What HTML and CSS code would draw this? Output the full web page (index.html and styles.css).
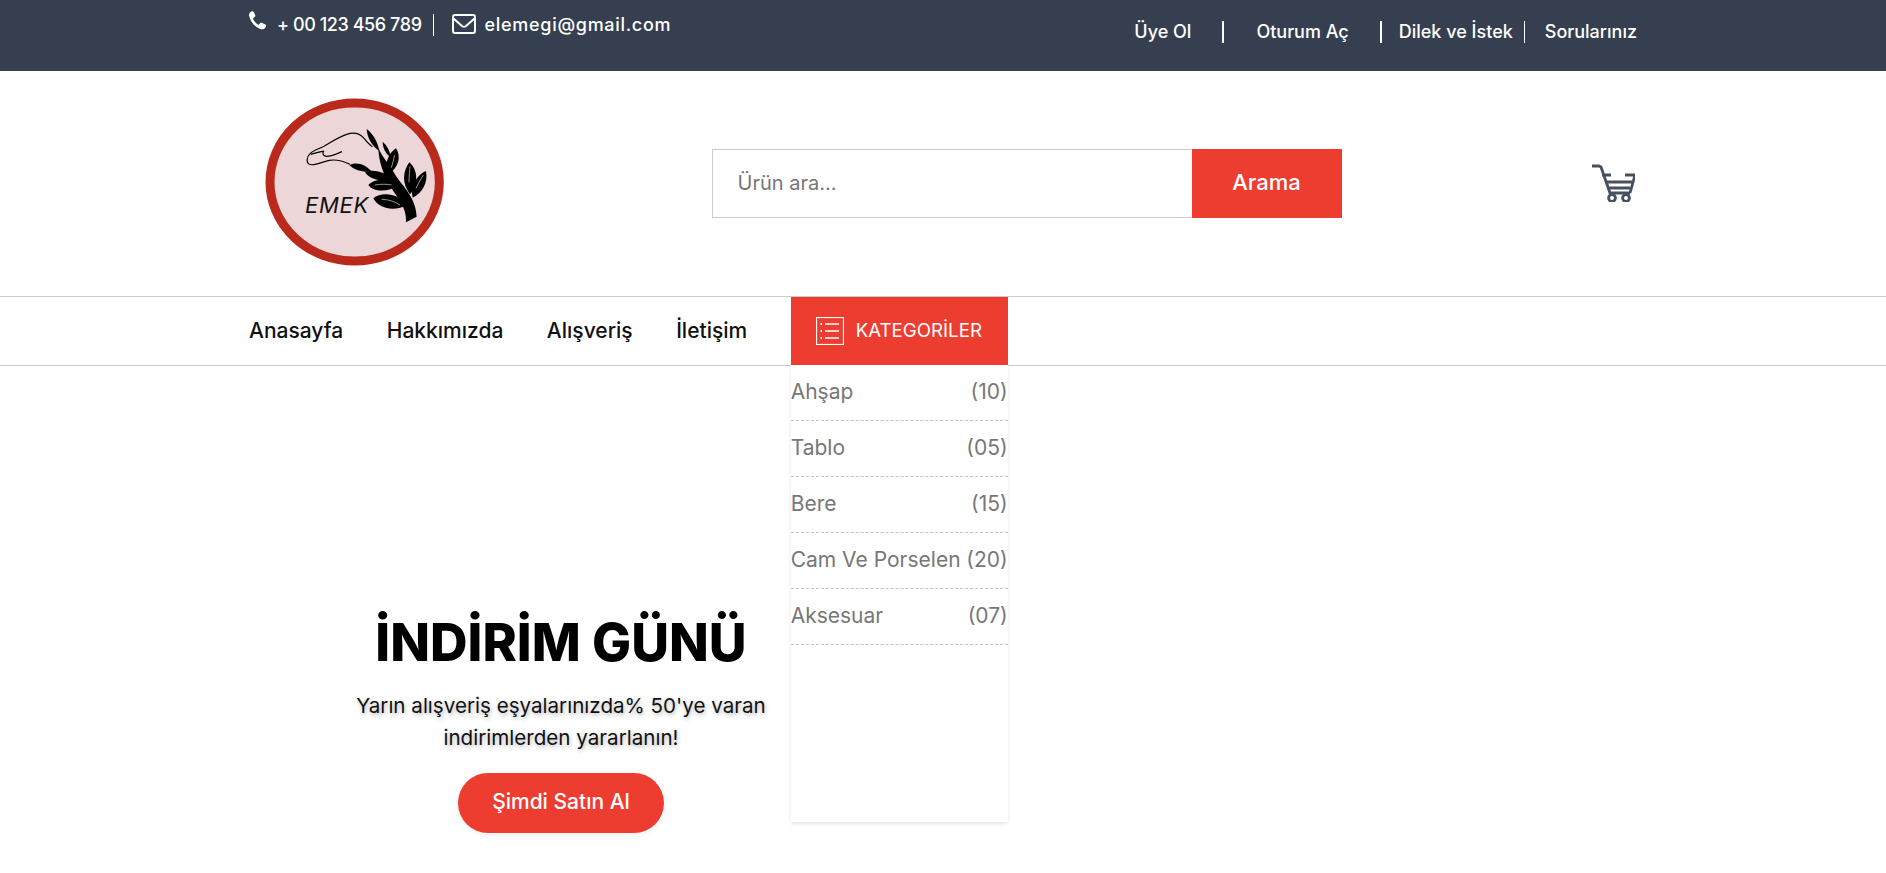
FILE: index.html
```html
<!DOCTYPE html>
<html lang="tr">
<head>
<meta charset="utf-8">
<title>Emek</title>
<link rel="stylesheet" href="styles.css">
</head>
<body>
<div class="topbar">
  <div class="container topbar-inner">
    <div class="contact">
      <span class="contact-item divided">
        <svg class="ic-phone" viewBox="0 0 20 20"><path fill="#fff" d="M1 4.200C.6 2.800 1.800.8 4 .2c.7-.2 1.200 0 1.500.7l1.400 3.200c.2.600.1 1-.4 1.400L5.100 6.700c-.3.200-.3.500-.2.800.900 2.100 2.600 4.200 4.700 5.500.3.200.600.100.800-.1l1.300-1.400c.4-.4.900-.5 1.400-.3l3.500 1.600c.6.300.8.800.6 1.400-.7 2.100-2.500 3.500-4.200 3.200C7.500 16.500 2.300 10.500 1 4.200z"/></svg>
        <span class="phone-text">+ 00 123 456 789</span>
      </span>
      <span class="contact-item">
        <svg class="ic-mail" viewBox="0 0 24 20"><rect x="1" y="1" width="22" height="18" rx="2" fill="none" stroke="#fff" stroke-width="2"/><path d="M1.500 4.500 10 12c1.200 1 2.800 1 4 0l8.500-7.500" fill="none" stroke="#fff" stroke-width="2"/></svg>
        <span class="mail-text">elemegi@gmail.com</span>
      </span>
    </div>
    <nav class="account">
      <a class="acc-a sep-thick">Üye Ol</a>
      <a class="acc-b sep-thick">Oturum Aç</a>
      <a class="acc-c sep-thin">Dilek ve İstek</a>
      <a class="acc-d">Sorularınız</a>
    </nav>
  </div>
</div>

<header class="container header">
  <svg class="logo" viewBox="0 0 630 570" role="img" aria-label="Emek">
    <ellipse cx="314" cy="291" rx="254" ry="237" fill="#edd6d8" stroke="#b92a1c" stroke-width="27"/>
    <path fill="none" stroke="#000" stroke-width="3.500" d="M300 238c-25-12-45-15-62-12-20 4-45 18-60 12-10-5-8-22 2-32 12-12 30-15 42-22 22-12 42-28 68-36 18-6 38-4 52 12 8 10 14 18 25 25 M182 208c15-5 32-8 40-10 M222 198c-6 6-4 14 6 16 15 1 32-8 48-14"/>
    <g fill="#000">
      <path d="M385 190C400 220 415 235 433 265 453 300 498 335 500 395L468 412C470 382 458 357 436 327 411 292 386 242 385 190Z"/>
      <path d="M350 132C368 145 383 170 388 198 366 183 352 160 350 132Z"/>
      <path d="M398 170C412 182 420 198 422 216 406 206 398 188 398 170Z"/>
      <path d="M438 190C455 215 445 250 415 268 400 240 415 205 438 190Z"/>
      <path d="M478 232C505 255 505 300 480 328 455 295 458 260 478 232Z"/>
      <path d="M528 258C535 295 515 325 488 338 480 305 500 270 528 258Z"/>
      <path d="M370 340C395 318 450 325 467 362 430 380 385 370 370 340Z"/>
      <path d="M355 300C375 278 425 280 440 302 415 322 370 322 355 300Z"/>
      <path d="M345 262C370 250 410 262 425 285 395 290 360 285 345 262Z"/>
      <path d="M298 240C320 228 350 240 365 260 335 262 312 255 298 240Z"/>
    </g>
    <path fill="none" stroke="#edd6d8" stroke-width="2" d="M395 343c20 0 40 7 55 17M375 300c18-3 36-3 50 0M477 292c0-20 2-35 3-48M498 310c6-14 14-26 22-40M424 248c4-14 8-26 10-38"/>
    <text class="logo-text" x="165" y="384" textLength="190">EMEK</text>
  </svg>
  <form class="search">
    <input class="search-input" type="text" placeholder="Ürün ara...">
    <button class="search-btn" type="button"><span class="search-label">Arama</span></button>
  </form>
  <svg class="cart" viewBox="0 0 44 38" fill="none" stroke="#47505f" stroke-width="2.800">
    <path d="M1 2h7l2 1 9 26h20M11 11h9M15 18h26M17 24h22M34 11h10l-5 18"/>
    <circle cx="21" cy="34" r="3.400"/><circle cx="35" cy="34" r="3.400"/>
  </svg>
</header>

<div class="navbar">
  <div class="container nav-inner">
    <a class="nav-link">Anasayfa</a>
    <a class="nav-link">Hakkımızda</a>
    <a class="nav-link">Alışveriş</a>
    <a class="nav-link">İletişim</a>
    <div class="cat-wrap">
      <div class="cat-btn">
        <svg class="ic-list" viewBox="0 0 28 28" fill="none" stroke="#fff"><rect x=".5" y=".5" width="27" height="27" stroke-width="1.200"/><path d="M9 7h14M9 14h14M9 21h14" stroke-width="1.300"/><path d="M4.500 7h1.500M4.500 14h1.500M4.500 21h1.500" stroke-width="1.800"/></svg>
        <span>KATEGORİLER</span>
      </div>
      <ul class="cat-menu">
        <li class="cat-row"><span>Ahşap</span><span>(10)</span></li>
        <li class="cat-row"><span>Tablo</span><span>(05)</span></li>
        <li class="cat-row"><span>Bere</span><span>(15)</span></li>
        <li class="cat-row"><span>Cam Ve Porselen</span><span>(20)</span></li>
        <li class="cat-row"><span>Aksesuar</span><span>(07)</span></li>
      </ul>
    </div>
  </div>
</div>

<main class="container main">
  <section class="hero">
    <h1 class="hero-title">İNDİRİM GÜNÜ</h1>
    <p class="hero-text">Yarın alışveriş eşyalarınızda% 50'ye varan indirimlerden yararlanın!</p>
    <a class="hero-btn">Şimdi Satın Al</a>
  </section>
</main>
</body>
</html>
```
FILE: styles.css
```css
* { box-sizing: border-box; }
html, body { margin: 0; padding: 0; background: #fff; }
body { font-family: Inter, "Open Sans", sans-serif; overflow: hidden; height: 873px; }
.container { width: 1388px; margin-left: auto; margin-right: auto; }

.topbar { background: #353f4f; height: 71px; color: #fff; font-size: 18px; font-weight: 500; }
.topbar-inner { display: flex; justify-content: space-between; }
.contact { display: flex; align-items: center; height: 49px; }
.contact-item { display: flex; align-items: center; }
.contact-item.divided { border-right: 1px solid #fff; padding-right: 11px; margin-right: 18px; height: 22px; }
.phone-text { letter-spacing: -.42px; }
.mail-text { letter-spacing: .7px; }
.ic-phone { width: 21px; height: 21px; margin-right: 8px; margin-top: -6px; margin-left: -1px; }
.ic-mail { width: 24px; height: 20px; margin-right: 9px; margin-top: -2px; }

.account { display: flex; align-items: center; height: 64px; }
.account a { display: block; line-height: 22px; white-space: nowrap; }
.sep-thick { border-right: 2px solid #fff; }
.sep-thin { border-right: 1px solid #fff; }
.acc-a { padding-right: 31px; }
.acc-b { padding-left: 32px; padding-right: 31px; }
.acc-c { padding-left: 17px; padding-right: 11px; }
.acc-d { padding-left: 20px; }

.header { display: flex; align-items: center; justify-content: space-between; height: 225px; }
.logo { width: 210px; height: 190px; margin-left: 1px; margin-bottom: 7px; }
.logo-text { font-family: Inter, sans-serif; font-style: italic; font-size: 66px; font-weight: 400; fill: #111; }
.search { display: flex; width: 630px; height: 69px; margin-left: 2px; }
.search-input { flex: 1; min-width: 0; border: 1px solid #ccc; border-right: 0; padding: 0 25px 2px; font: 400 20px Inter, sans-serif; color: #777; outline: none; }
.search-input::placeholder { color: #777; opacity: 1; }
.search-btn { width: 150px; border: 0; padding: 0 0 3px; background: #ed3d31; color: #fff; font: 500 22px Inter, sans-serif; }
.cart { width: 44px; height: 38px; margin-right: 2px; margin-bottom: 2px; }

.navbar { border-top: 1px solid #ccc; border-bottom: 1px solid #ccc; height: 70px; }
.nav-inner { display: flex; align-items: stretch; gap: 43.500px; height: 68px; }
.nav-link { display: flex; align-items: center; padding-bottom: 2px; font-size: 21px; font-weight: 500; color: #111; }
.cat-wrap { position: relative; width: 217px; z-index: 2; }
.cat-btn { display: flex; align-items: center; height: 69px; padding: 0 0 2px 25px; gap: 12px; background: #ed3d31; color: #fff; font-size: 18.700px; }
.ic-list { width: 28px; height: 28px; }
.cat-menu { position: absolute; top: 68px; left: 0; right: 0; height: 457px; margin: 0; padding: 0; list-style: none; background: #fff; box-shadow: 0 2px 4px rgba(0,0,0,.1); color: #777; font-size: 21px; }
.cat-row { display: flex; align-items: center; justify-content: space-between; height: 56px; padding-bottom: 3px; border-bottom: 1px dashed #c4c4c4; white-space: nowrap; }

.hero { width: 440px; margin-left: 92px; padding-top: 241px; text-align: center; }
.hero-title { margin: 0; font-size: 52px; line-height: 72px; font-weight: 800; color: #000; white-space: nowrap; }
.hero-text { margin: 11px 0 0; padding: 0 8px; font-size: 20.600px; line-height: 32px; color: #111; text-shadow: 1px 2px 4px rgba(0,0,0,.3); }
.hero-btn { display: block; width: 206px; height: 60px; margin: 19px auto 0; border-radius: 30px; background: #ed3d31; color: #fff; font-size: 21px; font-weight: 500; line-height: 58px; box-shadow: 0 2px 6px rgba(0,0,0,.06); }
```
